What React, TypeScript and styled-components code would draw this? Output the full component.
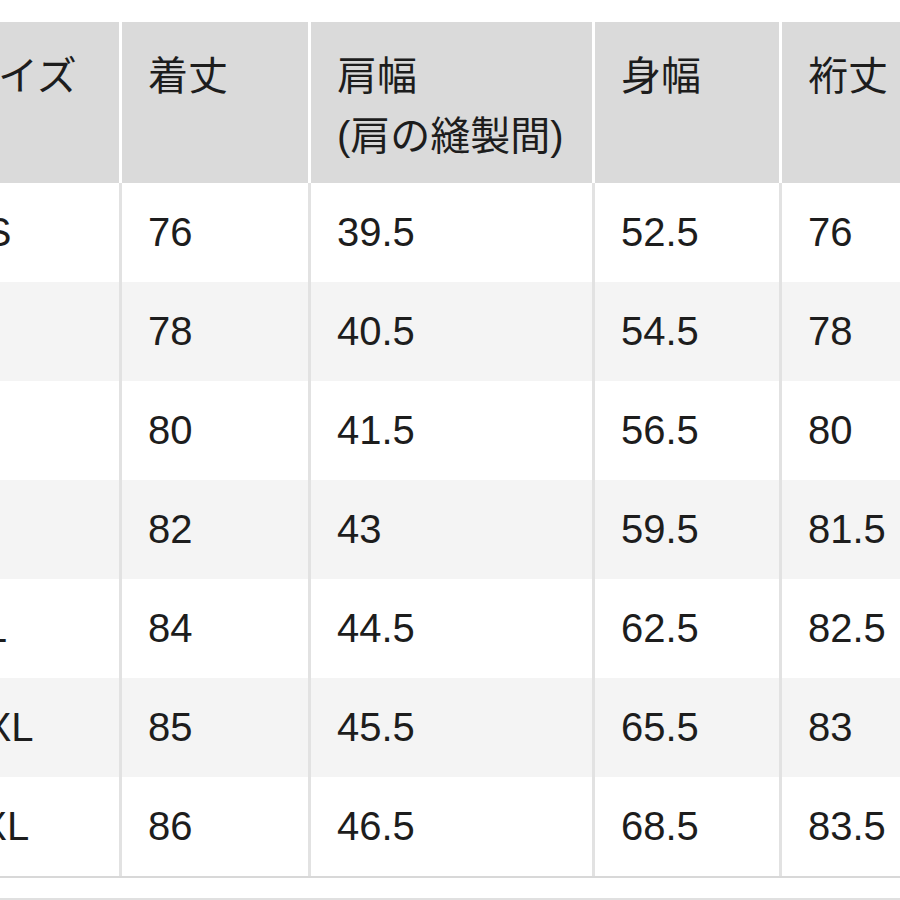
import styled, { createGlobalStyle } from 'styled-components'

const GlobalStyle = createGlobalStyle`
  html, body {
    margin: 0;
    padding: 0;
    background: #fff;
    overflow: hidden;
  }
  body {
    font-family: "Liberation Sans", "Noto Sans CJK JP", sans-serif;
    color: #1d1d1d;
  }
`

const columns = '187px 186px 281px 184px 200px'

const Page = styled.div`
  padding-top: 22px;
  margin-left: -68px;
  width: 1050px;
`

const Table = styled.div`
  border-bottom: 2px solid #d8d8d8;
`

const HeadRow = styled.div`
  display: grid;
  grid-template-columns: ${columns};
  column-gap: 3px;
  height: 161px;
  background: #fff;
`

const HeadCell = styled.div`
  background: #dadada;
  padding: 24px 0 0 26px;
  font-size: 40px;
  line-height: 60px;
  white-space: nowrap;
`

const BodyRow = styled.div`
  display: grid;
  grid-template-columns: ${columns};
  column-gap: 3px;
  height: 99px;
  background: #e2e2e2;
`

const Cell = styled.div<{ $alt: boolean }>`
  display: flex;
  align-items: center;
  padding-left: 26px;
  background: ${props => (props.$alt ? '#f4f4f4' : '#fff')};
  font-size: 40px;
  white-space: nowrap;
`

const Rule = styled.div`
  margin-top: 20px;
  border-top: 2px solid #e0e0e0;
`

const headers = [['サイズ'], ['着丈'], ['肩幅', '(肩の縫製間)'], ['身幅'], ['裄丈']]

const rows = [
  ['XS', '76', '39.5', '52.5', '76'],
  ['S', '78', '40.5', '54.5', '78'],
  ['M', '80', '41.5', '56.5', '80'],
  ['L', '82', '43', '59.5', '81.5'],
  ['XL', '84', '44.5', '62.5', '82.5'],
  ['XXL', '85', '45.5', '65.5', '83'],
  ['3XL', '86', '46.5', '68.5', '83.5'],
]

export default function App() {
  return (
    <>
      <GlobalStyle />
      <Page>
        <Table>
          <HeadRow>
            {headers.map((lines, i) => (
              <HeadCell key={i}>
                {lines.map(line => (
                  <div key={line}>{line}</div>
                ))}
              </HeadCell>
            ))}
          </HeadRow>
          {rows.map((row, r) => (
            <BodyRow key={row[0]}>
              {row.map((value, c) => (
                <Cell key={c} $alt={r % 2 === 1}>
                  {value}
                </Cell>
              ))}
            </BodyRow>
          ))}
        </Table>
        <Rule />
      </Page>
    </>
  )
}
